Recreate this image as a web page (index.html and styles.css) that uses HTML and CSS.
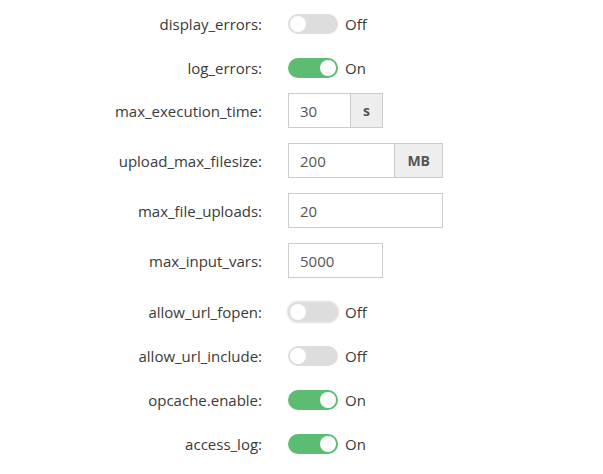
FILE: index.html
```html
<!DOCTYPE html>
<html lang="en">
<head>
  <meta charset="UTF-8" />
  <title>PHP settings</title>
  <link rel="stylesheet" href="styles.css">
</head>
<body>
  <form class="settings">
    <div class="row toggle-row">
      <label>display_errors:</label>
      <div class="control"><span class="switch"></span><span class="state">Off</span></div>
    </div>
    <div class="row toggle-row">
      <label>log_errors:</label>
      <div class="control"><span class="switch on"></span><span class="state">On</span></div>
    </div>
    <div class="row">
      <label>max_execution_time:</label>
      <div class="control">
        <div class="input-group short">
          <input type="text" value="30" />
          <span class="addon">s</span>
        </div>
      </div>
    </div>
    <div class="row">
      <label>upload_max_filesize:</label>
      <div class="control">
        <div class="input-group long">
          <input type="text" value="200" />
          <span class="addon">MB</span>
        </div>
      </div>
    </div>
    <div class="row">
      <label>max_file_uploads:</label>
      <div class="control"><input class="field long" type="text" value="20" /></div>
    </div>
    <div class="row">
      <label>max_input_vars:</label>
      <div class="control"><input class="field short" type="text" value="5000" /></div>
    </div>
    <div class="row toggle-row">
      <label>allow_url_fopen:</label>
      <div class="control"><span class="switch focus"></span><span class="state">Off</span></div>
    </div>
    <div class="row toggle-row">
      <label>allow_url_include:</label>
      <div class="control"><span class="switch"></span><span class="state">Off</span></div>
    </div>
    <div class="row toggle-row">
      <label>opcache.enable:</label>
      <div class="control"><span class="switch on"></span><span class="state">On</span></div>
    </div>
    <div class="row toggle-row">
      <label>access_log:</label>
      <div class="control"><span class="switch on"></span><span class="state">On</span></div>
    </div>
  </form>
</body>
</html>
```

FILE: styles.css
```css
body {
  margin: 0;
  background: #fff;
  font-family: 'Open Sans', sans-serif;
  font-size: 15px;
  color: #333;
}

.settings {
  padding-top: 5px;
}

.row {
  display: grid;
  grid-template-columns: 262px 1fr;
  column-gap: 26px;
  align-items: center;
  height: 35px;
  margin-bottom: 15px;
}

.toggle-row {
  height: 20px;
  padding-top: 9px;
}

.row label {
  text-align: right;
  color: #3a3a3a;
  line-height: 20px;
}

.control {
  display: flex;
  align-items: center;
}

.switch {
  position: relative;
  display: inline-block;
  width: 50px;
  height: 20px;
  border-radius: 10px;
  background: #ddd;
}

.switch::after {
  content: '';
  position: absolute;
  top: 2px;
  left: 2px;
  width: 16px;
  height: 16px;
  border-radius: 50%;
  background: #fff;
}

.switch.on {
  background: #5cbd72;
}

.switch.on::after {
  left: 32px;
}

.switch.focus {
  box-shadow: 0 0 2px 1px rgba(0, 0, 0, 0.12);
}

.state {
  margin-left: 7px;
  color: #3a3a3a;
}

.input-group {
  display: flex;
  height: 35px;
}

.input-group input,
.field {
  box-sizing: border-box;
  height: 35px;
  padding: 0 11px;
  border: 1px solid #ccc;
  font-family: 'Open Sans', sans-serif;
  font-size: 15px;
  color: #555;
  background: #fff;
  outline: none;
}

.input-group input {
  flex: 1;
  min-width: 0;
  border-right: none;
}

.addon {
  display: flex;
  align-items: center;
  padding: 0 12px;
  border: 1px solid #ccc;
  background: #eee;
  color: #555;
  font-weight: 700;
  font-size: 14px;
}

.short {
  width: 95px;
}

.long {
  width: 155px;
}
```
